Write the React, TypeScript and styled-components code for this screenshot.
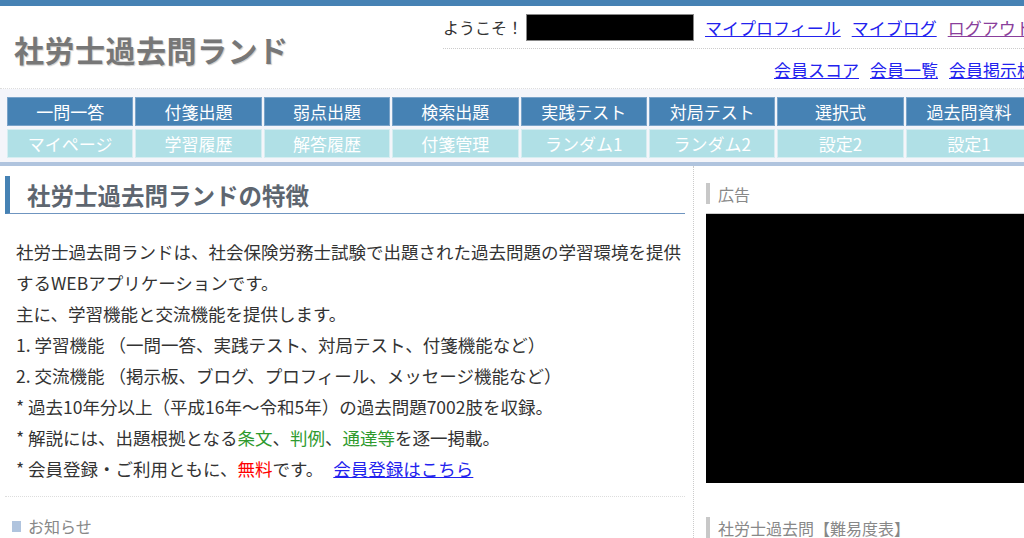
import styled, { createGlobalStyle } from "styled-components";

const GlobalStyle = createGlobalStyle`
  body {
    margin: 0;
    overflow: hidden;
    background: #fff;
    font-family: "Noto Sans CJK JP", "Noto Sans", sans-serif;
    color: #333;
  }
`;

const Page = styled.div`
  width: 1040px;
  height: 538px;
  overflow: hidden;
`;

const TopBar = styled.div`
  height: 6px;
  background: #4682b4;
`;

const Header = styled.header`
  display: flex;
  height: 82px;
  border-bottom: 1px dotted #ddd;
`;

const Logo = styled.h1`
  margin: 0;
  padding: 3px 0 0 14px;
  display: flex;
  align-items: center;
  font-size: 30px;
  font-weight: bold;
  color: #777;
  text-shadow: 1px 1px 1px #ccc;
  letter-spacing: 0.5px;
`;

const UserBox = styled.div`
  margin-left: auto;
  width: 597px;
`;

const UserRow = styled.div`
  display: flex;
  align-items: center;
  height: 42px;
  gap: 11px;
  font-size: 16px;
  border-bottom: 1px dotted #ccc;
`;

const SubRow = styled.div`
  display: flex;
  justify-content: flex-end;
  align-items: center;
  height: 40px;
  gap: 11px;
  padding-right: 6px;
`;

const Welcome = styled.span`
  color: #333;
  font-size: 16px;
`;

const Masked = styled.span`
  display: inline-block;
  width: 166px;
  height: 25px;
  background: #000;
  border: 1px solid #888;
  margin-left: -8px;
`;

const TopLink = styled.a<{ $visited?: boolean }>`
  color: ${(p) => (p.$visited ? "#8a3f9c" : "#2222ee")};
  text-decoration: underline;
  font-size: 17px;
  white-space: nowrap;
`;

const NavArea = styled.nav`
  background: #f4f5fa;
  padding: 8px 0 4px 7px;
  border-bottom: 4px solid #b0c4de;
`;

const NavGrid = styled.div`
  display: grid;
  grid-template-columns: repeat(8, 126.4px);
  grid-auto-rows: 29px;
  column-gap: 2px;
  row-gap: 3px;
`;

const NavCell = styled.a<{ $sub?: boolean }>`
  display: flex;
  align-items: center;
  justify-content: center;
  background: ${(p) => (p.$sub ? "#b0e0e6" : "#4682b4")};
  color: #fff;
  font-size: 17px;
  text-decoration: none;
  outline: 1px solid ${(p) => (p.$sub ? "#d6eef1" : "#7aa3c9")};
  outline-offset: -1px;
`;

const Main = styled.div`
  display: flex;
`;

const Content = styled.main`
  width: 680px;
  padding: 0 5px 0 5px;
`;

const Heading = styled.h2`
  margin: 10px 0 0;
  height: 37px;
  display: flex;
  align-items: center;
  padding-left: 17px;
  border-left: 5px solid #4682b4;
  border-bottom: 1px solid #6f95c0;
  font-size: 23.5px;
  font-weight: bold;
  color: #5e6670;
`;

const Intro = styled.div`
  margin-top: 22px;
  padding-left: 11px;
  width: 672px;
  font-size: 17.5px;
  line-height: 31px;
  color: #333;
`;

const Line = styled.div``;

const Green = styled.span`
  color: #2e9a2e;
`;

const Red = styled.span`
  color: #ff0000;
`;

const InlineLink = styled.a`
  color: #2222ee;
  text-decoration: underline;
  margin-left: 10px;
`;

const Separator = styled.hr`
  margin: 12px 0 0;
  border: 0;
  border-top: 1px dotted #ddd;
`;

const Notice = styled.div`
  margin-top: 17px;
  display: flex;
  align-items: center;
  gap: 7px;
  padding-left: 7px;
  font-size: 16px;
  color: #888;
  &::before {
    content: "";
    width: 9px;
    height: 11px;
    background: #b0c4de;
  }
`;

const Sidebar = styled.aside`
  margin-left: 3px;
  border-left: 1px dotted #ccc;
  padding-left: 12px;
  width: 340px;
  height: 380px;
`;

const SideHeading = styled.div<{ $top: number }>`
  margin-top: ${(p) => p.$top}px;
  height: 21px;
  display: flex;
  align-items: center;
  border-left: 4px solid #c8c8c8;
  padding-left: 8px;
  font-size: 16px;
  color: #888;
`;

const AdBox = styled.div`
  margin-top: 9px;
  height: 269px;
  background: #000;
  border-top: 1px solid #ccc;
`;

const mainNav = ["一問一答", "付箋出題", "弱点出題", "検索出題", "実践テスト", "対局テスト", "選択式", "過去問資料"];
const subNav = ["マイページ", "学習履歴", "解答履歴", "付箋管理", "ランダム1", "ランダム2", "設定2", "設定1"];

export default function App() {
  return (
    <Page>
      <GlobalStyle />
      <TopBar />
      <Header>
        <Logo>社労士過去問ランド</Logo>
        <UserBox>
          <UserRow>
            <Welcome>ようこそ！</Welcome>
            <Masked />
            <TopLink href="#">マイプロフィール</TopLink>
            <TopLink href="#">マイブログ</TopLink>
            <TopLink href="#" $visited>ログアウト</TopLink>
          </UserRow>
          <SubRow>
            <TopLink href="#">会員スコア</TopLink>
            <TopLink href="#">会員一覧</TopLink>
            <TopLink href="#">会員掲示板</TopLink>
          </SubRow>
        </UserBox>
      </Header>
      <NavArea>
        <NavGrid>
          {mainNav.map((t) => (
            <NavCell key={t} href="#">{t}</NavCell>
          ))}
          {subNav.map((t) => (
            <NavCell key={t} href="#" $sub>{t}</NavCell>
          ))}
        </NavGrid>
      </NavArea>
      <Main>
        <Content>
          <Heading>社労士過去問ランドの特徴</Heading>
          <Intro>
            <Line>社労士過去問ランドは、社会保険労務士試験で出題された過去問題の学習環境を提供するWEBアプリケーションです。</Line>
            <Line>主に、学習機能と交流機能を提供します。</Line>
            <Line>1. 学習機能 （一問一答、実践テスト、対局テスト、付箋機能など）</Line>
            <Line>2. 交流機能 （掲示板、ブログ、プロフィール、メッセージ機能など）</Line>
            <Line>* 過去10年分以上（平成16年～令和5年）の過去問題7002肢を収録。</Line>
            <Line>
              * 解説には、出題根拠となる<Green>条文</Green>、<Green>判例</Green>、<Green>通達等</Green>を逐一掲載。
            </Line>
            <Line>
              * 会員登録・ご利用ともに、<Red>無料</Red>です。
              <InlineLink href="#">会員登録はこちら</InlineLink>
            </Line>
          </Intro>
          <Separator />
          <Notice>お知らせ</Notice>
        </Content>
        <Sidebar>
          <SideHeading $top={17}>広告</SideHeading>
          <AdBox />
          <SideHeading $top={34}>社労士過去問【難易度表】</SideHeading>
        </Sidebar>
      </Main>
    </Page>
  );
}
